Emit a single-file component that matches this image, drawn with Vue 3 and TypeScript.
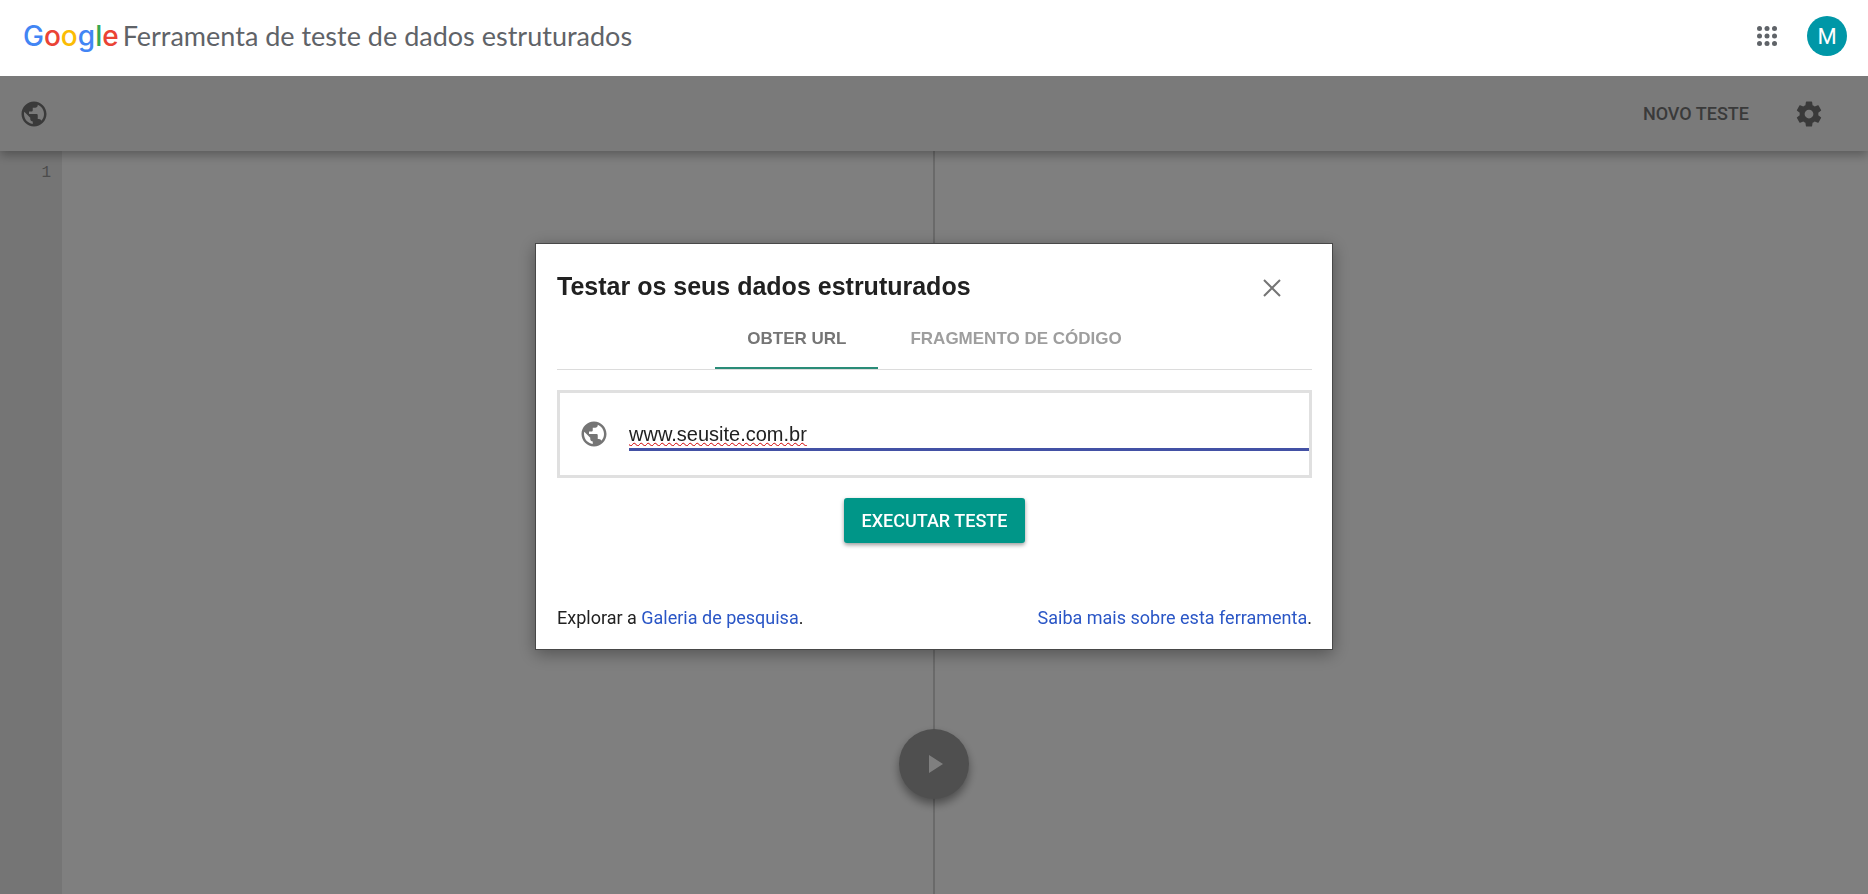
<script setup lang="ts">
import { ref } from 'vue'

type TabId = 'url' | 'code'

const tabs: { id: TabId; label: string }[] = [
  { id: 'url', label: 'OBTER URL' },
  { id: 'code', label: 'FRAGMENTO DE CÓDIGO' },
]
const logo = [
  { letter: 'G', tone: 'blue' },
  { letter: 'o', tone: 'red' },
  { letter: 'o', tone: 'yellow' },
  { letter: 'g', tone: 'blue' },
  { letter: 'l', tone: 'green' },
  { letter: 'e', tone: 'red' },
]
const activeTab = ref<TabId>('url')
const address = ref('www.seusite.com.br')
const open = ref(true)
const globe =
  'M12 2C6.48 2 2 6.48 2 12s4.48 10 10 10 10-4.48 10-10S17.52 2 12 2zm-1 17.93c-3.95-.49-7-3.85-7-7.93 0-.62.08-1.21.21-1.79L9 15v1c0 1.1.9 2 2 2v1.93zm6.9-2.54c-.26-.81-1-1.39-1.9-1.39h-1v-3c0-.55-.45-1-1-1H8v-2h2c.55 0 1-.45 1-1V7h2c1.1 0 2-.9 2-2v-.41c2.93 1.19 5 4.06 5 7.41 0 2.08-.8 3.97-2.1 5.39z'
</script>

<template>
  <div class="page">
    <header class="header">
      <h1 class="brand">
        <span class="logo"><span v-for="(part, i) in logo" :key="i" :class="part.tone">{{ part.letter }}</span></span>
        <span class="product">Ferramenta de teste de dados estruturados</span>
      </h1>
      <div class="account">
        <button class="icon-button" type="button" aria-label="Google Apps">
          <svg width="20" height="20" viewBox="0 0 20 20" fill="#5f6368">
            <template v-for="y in 3" :key="y">
              <circle v-for="x in 3" :key="x" :cx="x * 7.5 - 5" :cy="y * 7.5 - 5" r="2.5" />
            </template>
          </svg>
        </button>
        <button class="avatar" type="button">M</button>
      </div>
    </header>

    <nav class="toolbar">
      <button class="icon-button" type="button" aria-label="URL">
        <svg width="30" height="30" viewBox="0 0 24 24" fill="#757575"><path :d="globe" /></svg>
      </button>
      <div class="actions">
        <button class="new-test" type="button" @click="open = true">NOVO TESTE</button>
        <button class="icon-button" type="button" aria-label="Configurações">
          <svg width="30" height="30" viewBox="0 0 24 24" fill="#757575">
            <path d="M19.43 12.98c.04-.32.07-.64.07-.98s-.03-.66-.07-.98l2.11-1.65c.19-.15.24-.42.12-.64l-2-3.46c-.12-.22-.39-.3-.61-.22l-2.49 1c-.52-.4-1.08-.73-1.69-.98l-.38-2.65C14.46 2.18 14.25 2 14 2h-4c-.25 0-.46.18-.49.42l-.38 2.65c-.61.25-1.17.59-1.69.98l-2.49-1c-.23-.09-.49 0-.61.22l-2 3.46c-.13.22-.07.49.12.64l2.11 1.65c-.04.32-.07.65-.07.98s.03.66.07.98l-2.11 1.65c-.19.15-.24.42-.12.64l2 3.46c.12.22.39.3.61.22l2.49-1c.52.4 1.08.73 1.69.98l.38 2.65c.03.24.24.42.49.42h4c.25 0 .46-.18.49-.42l.38-2.65c.61-.25 1.17-.59 1.69-.98l2.49 1c.23.09.49 0 .61-.22l2-3.46c.12-.22.07-.49-.12-.64l-2.11-1.65zM12 15.5c-1.93 0-3.5-1.57-3.5-3.5s1.57-3.5 3.5-3.5 3.5 1.57 3.5 3.5-1.57 3.5-3.5 3.5z" />
          </svg>
        </button>
      </div>
    </nav>

    <main class="workspace">
      <section class="editor"><div class="gutter">1</div></section>
      <section class="results"></section>
      <button class="run" type="button" aria-label="Executar">
        <svg width="18" height="18" viewBox="0 0 18 18" fill="#fff"><path d="M4 0v18l14-9z" /></svg>
      </button>
    </main>

    <div v-if="open" class="backdrop">
      <div class="dialog" role="dialog" aria-labelledby="dialog-title">
        <div class="dialog-head">
          <h2 id="dialog-title">Testar os seus dados estruturados</h2>
          <button class="icon-button" type="button" aria-label="Fechar" @click="open = false">
            <svg width="18" height="22" viewBox="0 0 18 22" fill="none" stroke="#757575" stroke-width="2"><path d="M1 5l16 16M17 5L1 21" /></svg>
          </button>
        </div>
        <div class="tabs" role="tablist">
          <button
            v-for="tab in tabs"
            :key="tab.id"
            class="tab"
            :class="{ active: tab.id === activeTab }"
            type="button"
            role="tab"
            :aria-selected="tab.id === activeTab"
            @click="activeTab = tab.id"
          >{{ tab.label }}</button>
        </div>
        <div class="field">
          <svg width="30" height="30" viewBox="0 0 24 24" fill="#757575"><path :d="globe" /></svg>
          <input v-model="address" class="address" type="text" aria-label="URL" spellcheck="false" />
        </div>
        <button class="submit" type="button">EXECUTAR TESTE</button>
        <div class="dialog-foot">
          <span>Explorar a <a href="#galeria">Galeria de pesquisa</a>.</span>
          <span><a href="#ajuda">Saiba mais sobre esta ferramenta</a>.</span>
        </div>
      </div>
    </div>
  </div>
</template>

<style>
body {
  margin: 0;
}
</style>

<style scoped>
.page {
  display: flex;
  flex-direction: column;
  min-height: 100vh;
  font-family: Roboto, sans-serif;
  font-size: 18px;
  color: #212121;
}
button {
  padding: 0;
  border: 0;
  background: none;
  font: inherit;
  color: inherit;
  cursor: pointer;
}
svg {
  display: block;
}
.header {
  position: relative;
  z-index: 3;
  display: flex;
  align-items: center;
  justify-content: space-between;
  height: 76px;
  padding: 0 21px 4px 23px;
  box-sizing: border-box;
  background: #fff;
}
.brand {
  display: flex;
  align-items: baseline;
  gap: 4px;
  margin: 0;
  font-family: Lato, sans-serif;
  font-weight: 400;
  font-size: 27px;
  line-height: 36px;
  color: #5f6368;
}
.logo {
  font-family: Inter, sans-serif;
  font-size: 28px;
  font-weight: 500;
}
.blue {
  color: #4285f4;
}
.red {
  color: #ea4335;
}
.yellow {
  color: #fbbc05;
}
.green {
  color: #34a853;
}
.account {
  display: flex;
  align-items: center;
  gap: 30px;
}
.avatar {
  width: 40px;
  height: 40px;
  border-radius: 50%;
  background: #0097a7;
  color: #fff;
  font-size: 22px;
}
.toolbar {
  position: relative;
  z-index: 1;
  display: flex;
  align-items: center;
  justify-content: space-between;
  height: 75px;
  padding: 0 44px 0 19px;
  box-sizing: border-box;
  background: #f5f5f5;
  box-shadow: 0 4px 10px rgba(0, 0, 0, 0.3);
}
.actions {
  display: flex;
  align-items: center;
  gap: 45px;
}
.new-test {
  font-weight: 500;
  color: #757575;
}
.workspace {
  position: relative;
  flex: 1;
  display: grid;
  grid-template-columns: 1fr 1fr;
}
.editor {
  border-right: 1px solid #d5d5d5;
}
.results {
  border-left: 1px solid #d5d5d5;
}
.gutter {
  width: 62px;
  height: 100%;
  padding: 12px 11px 0 0;
  box-sizing: border-box;
  background: #ebebeb;
  color: #999;
  font-family: "Liberation Mono", monospace;
  font-size: 16px;
  line-height: 20px;
  text-align: right;
}
.run {
  position: absolute;
  left: 50%;
  bottom: 95px;
  display: grid;
  place-items: center;
  width: 70px;
  height: 70px;
  margin-left: -35px;
  border-radius: 50%;
  background: #9e9e9e;
  box-shadow: 0 5px 10px rgba(0, 0, 0, 0.4);
}
.backdrop {
  position: fixed;
  inset: 0;
  z-index: 2;
  display: grid;
  place-items: center;
  padding-bottom: 1px;
  background: rgba(0, 0, 0, 0.5);
}
.dialog {
  display: flex;
  flex-direction: column;
  width: 798px;
  max-width: 100%;
  padding: 20px 20px 17px 21px;
  box-sizing: border-box;
  border: 1px solid #484848;
  background: #fff;
  box-shadow: 0 4px 16px rgba(0, 0, 0, 0.35);
}
.dialog-head {
  display: flex;
  align-items: center;
  justify-content: space-between;
  padding-right: 31px;
}
.dialog-head h2 {
  margin: 0;
  font-family: "Liberation Sans", Arial, sans-serif;
  font-size: 25px;
  line-height: 44px;
}
.tabs {
  display: flex;
  justify-content: center;
  border-bottom: 1px solid #dcdcdc;
}
.tab {
  padding: 3px 32px 0;
  border-bottom: 2px solid transparent;
  font-family: "Liberation Sans", Arial, sans-serif;
  font-size: 17px;
  font-weight: 700;
  line-height: 56px;
  color: #9e9e9e;
}
.tab.active {
  border-color: #2a8c78;
  color: #757575;
}
.field {
  display: flex;
  align-items: center;
  gap: 20px;
  height: 88px;
  margin-top: 20px;
  padding-left: 19px;
  box-sizing: border-box;
  border: 3px solid #e0e0e0;
}
.address {
  flex: 1;
  min-width: 0;
  height: 34px;
  padding: 3px 0 0;
  box-sizing: border-box;
  border: 0;
  border-bottom: 3px solid #4351a5;
  outline: 0;
  font-family: "Liberation Sans", Arial, sans-serif;
  font-size: 20px;
  color: #212121;
  text-decoration: underline wavy #d00000 1px;
}
.submit {
  align-self: center;
  height: 45px;
  margin-top: 20px;
  padding: 0 18px;
  border-radius: 3px;
  background: #009688;
  box-shadow: 0 2px 4px rgba(0, 0, 0, 0.4);
  color: #fff;
  font-weight: 500;
}
.dialog-foot {
  display: flex;
  justify-content: space-between;
  margin-top: 61px;
  line-height: 28px;
}
.dialog-foot a {
  color: #2a56c6;
  text-decoration: none;
}
</style>
